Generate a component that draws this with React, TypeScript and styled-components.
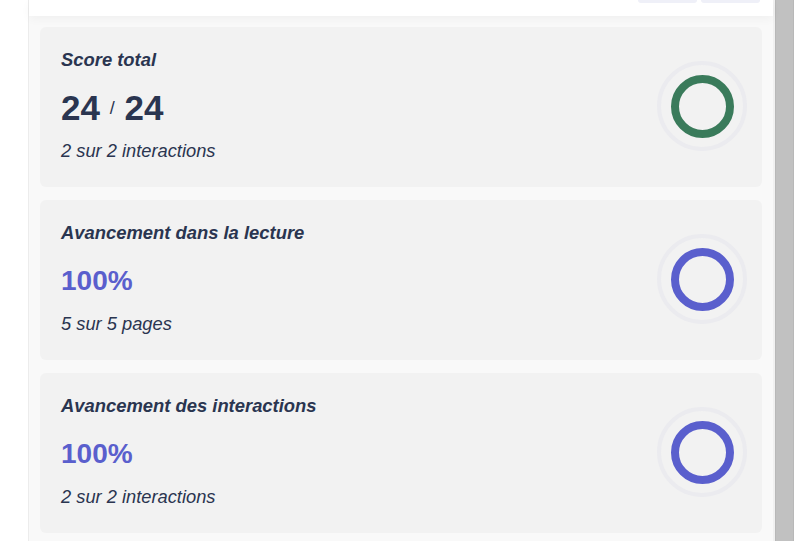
import React from 'react'
import styled, { createGlobalStyle } from 'styled-components'

const GlobalStyle = createGlobalStyle`
  html, body {
    margin: 0;
    padding: 0;
    background: #ffffff;
    font-family: 'Liberation Sans', Arial, sans-serif;
  }
`

type Tone = 'score' | 'progress'

type Stat = {
  title: string
  value: string
  total?: string
  caption: string
  tone: Tone
}

const stats: Stat[] = [
  { title: 'Score total', value: '24', total: '24', caption: '2 sur 2 interactions', tone: 'score' },
  { title: 'Avancement dans la lecture', value: '100%', caption: '5 sur 5 pages', tone: 'progress' },
  { title: 'Avancement des interactions', value: '100%', caption: '2 sur 2 interactions', tone: 'progress' },
]

const toneColor: Record<Tone, string> = {
  score: '#3a7b5b',
  progress: '#5a5fcd',
}

const StatCard = ({ title, value, total, caption, tone }: Stat) => (
  <Card>
    <CardText>
      <CardTitle>{title}</CardTitle>
      <CardValue tone={tone}>
        {value}
        {total && (
          <>
            {' '}
            <Slash>/</Slash> {total}
          </>
        )}
      </CardValue>
      <CardCaption>{caption}</CardCaption>
    </CardText>
    <RingHalo>
      <Ring color={toneColor[tone]} />
    </RingHalo>
  </Card>
)

export default function App() {
  return (
    <Shell>
      <GlobalStyle />
      <Gutter />
      <Panel>
        <PanelHeader>
          <HeaderButton />
          <HeaderButton />
        </PanelHeader>
        <CardList>
          {stats.map((s) => (
            <StatCard key={s.title} {...s} />
          ))}
        </CardList>
      </Panel>
      <ScrollTrack>
        <ScrollThumb />
      </ScrollTrack>
    </Shell>
  )
}

const Shell = styled.div`
  display: flex;
  height: 541px;
  overflow: hidden;
  background: #ffffff;
`

const Gutter = styled.div`
  width: 28px;
  flex-shrink: 0;
  border-right: 1px solid #ececec;
`

const Panel = styled.main`
  flex: 1;
  display: flex;
  flex-direction: column;
  background: #f9f9f9;
  min-width: 0;
`

const PanelHeader = styled.header`
  height: 16px;
  flex-shrink: 0;
  display: flex;
  justify-content: flex-end;
  align-items: flex-start;
  gap: 4px;
  padding-right: 13px;
  background: #ffffff;
  box-shadow: 0 3px 10px rgb(0 0 0 / 4%);
  position: relative;
  z-index: 1;
`

const HeaderButton = styled.div`
  width: 59px;
  height: 3px;
  background: #eff0f8;
  border-radius: 0 0 3px 3px;
`

const CardList = styled.section`
  display: flex;
  flex-direction: column;
  gap: 13px;
  padding: 11px;
`

const Card = styled.article`
  height: 160px;
  box-sizing: border-box;
  display: flex;
  align-items: center;
  justify-content: space-between;
  padding: 0 15px 0 21px;
  background: #f2f2f2;
  border-radius: 6px;
`

const CardText = styled.div`
  align-self: flex-start;
  display: flex;
  flex-direction: column;
  color: #2a3550;
  padding-top: 22px;
`

const CardTitle = styled.h2`
  margin: 0;
  font-size: 18.4px;
  line-height: 22px;
  font-weight: 700;
  font-style: italic;
`

const CardValue = styled.div<{ tone: Tone }>`
  margin-top: 17px;
  font-size: ${({ tone }) => (tone === 'score' ? '35px' : '28px')};
  line-height: 40px;
  font-weight: 700;
  color: ${({ tone }) => (tone === 'score' ? '#2a3550' : '#5a5fcd')};
`

const Slash = styled.span`
  font-size: 18px;
  font-weight: 400;
  vertical-align: 6px;
`

const CardCaption = styled.p`
  margin: 12px 0 0;
  font-size: 18.3px;
  line-height: 22px;
  font-style: italic;
`

const RingHalo = styled.div`
  width: 90px;
  height: 90px;
  margin-bottom: 2px;
  box-sizing: border-box;
  border-radius: 50%;
  border: 4px solid #ebebef;
  display: flex;
  align-items: center;
  justify-content: center;
`

const Ring = styled.div<{ color: string }>`
  width: 63px;
  height: 63px;
  box-sizing: border-box;
  border-radius: 50%;
  border: 8px solid ${({ color }) => color};
`

const ScrollTrack = styled.div`
  width: 27px;
  flex-shrink: 0;
  box-sizing: border-box;
  border-left: 2px solid #f1f1f1;
  padding-right: 6px;
  display: flex;
  background: #ffffff;
`

const ScrollThumb = styled.div`
  flex: 1;
  background: #c1c1c1;
  border-left: 1px solid #b8b8b8;
  border-right: 1px solid #b8b8b8;
`
